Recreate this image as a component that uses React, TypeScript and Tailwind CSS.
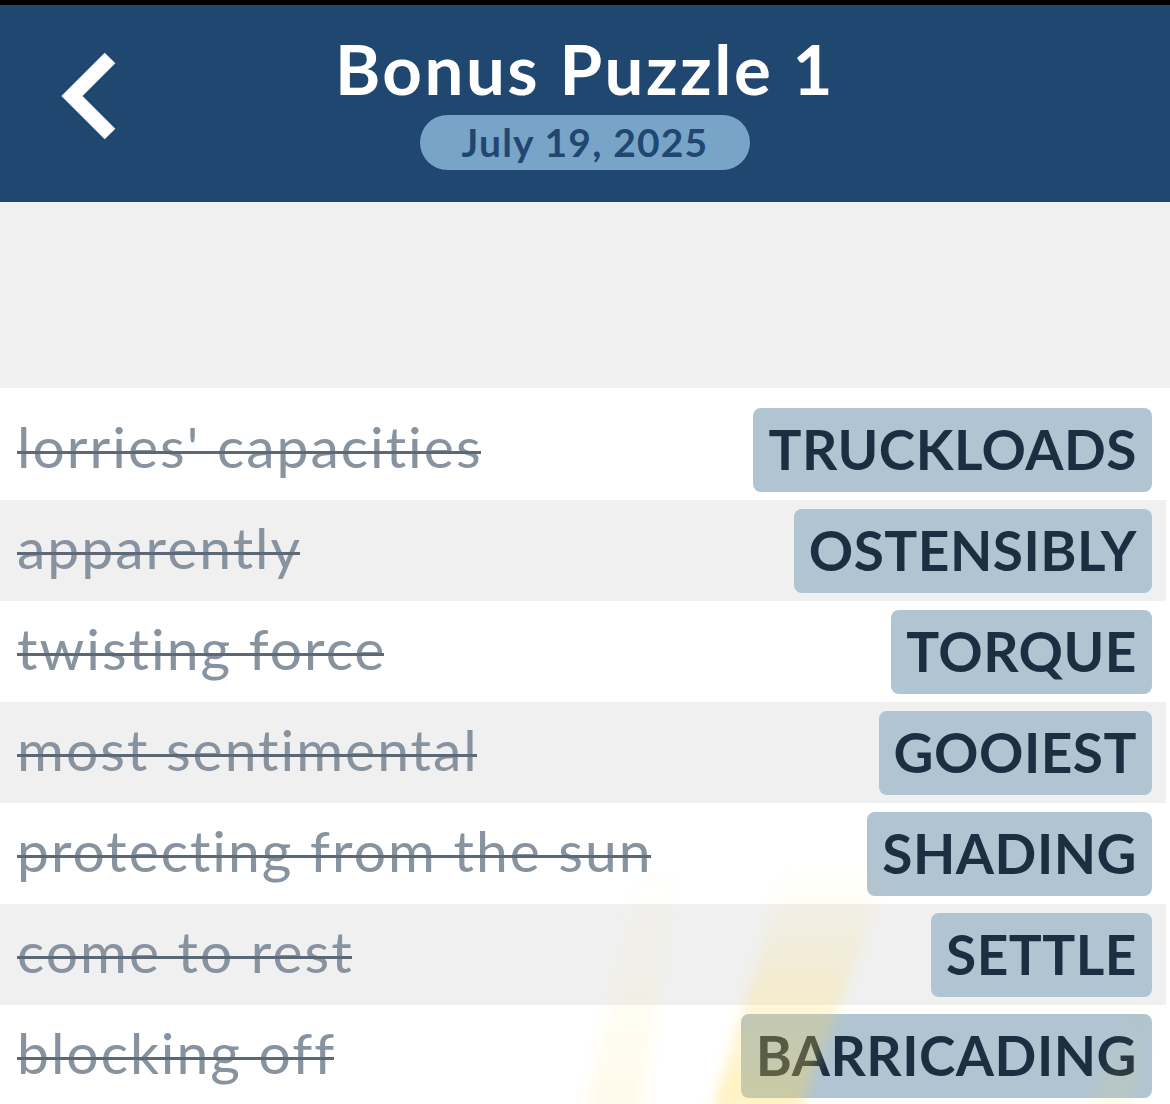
import React from "react";

const rows: { clue: string; answer: string }[] = [
  { clue: "lorries' capacities", answer: "TRUCKLOADS" },
  { clue: "apparently", answer: "OSTENSIBLY" },
  { clue: "twisting force", answer: "TORQUE" },
  { clue: "most sentimental", answer: "GOOIEST" },
  { clue: "protecting from the sun", answer: "SHADING" },
  { clue: "come to rest", answer: "SETTLE" },
  { clue: "blocking off", answer: "BARRICADING" },
];

function BackChevron() {
  return (
    <svg width="64" height="94" viewBox="0 0 64 94" fill="none">
      <path
        d="M53 9 L15 47 L53 85"
        stroke="#ffffff"
        strokeWidth="15"
        strokeLinecap="butt"
        strokeLinejoin="miter"
      />
    </svg>
  );
}

function Rays() {
  // faint yellow light streaks from the celebration effect
  return (
    <svg
      className="pointer-events-none absolute left-0 top-0"
      width="1170"
      height="1104"
      viewBox="0 0 1170 1104"
    >
      <defs>
        <linearGradient id="rayA" x1="0" y1="1" x2="0" y2="0">
          <stop offset="0" stopColor="#ffd84a" stopOpacity="0.34" />
          <stop offset="0.55" stopColor="#ffd84a" stopOpacity="0.18" />
          <stop offset="1" stopColor="#ffd84a" stopOpacity="0" />
        </linearGradient>
        <linearGradient id="rayB" x1="0" y1="1" x2="0" y2="0">
          <stop offset="0" stopColor="#ffd84a" stopOpacity="0.12" />
          <stop offset="1" stopColor="#ffd84a" stopOpacity="0" />
        </linearGradient>
        <filter id="soft" x="-20%" y="-20%" width="140%" height="140%">
          <feGaussianBlur stdDeviation="6" />
        </filter>
      </defs>
      <g filter="url(#soft)">
        <polygon points="712,1110 785,870 890,870 800,1110" fill="url(#rayA)" />
        <polygon points="585,1110 640,870 680,870 640,1110" fill="url(#rayB)" />
        <polygon points="1090,1110 1130,1000 1160,1000 1130,1110" fill="url(#rayB)" />
      </g>
    </svg>
  );
}

export default function App() {
  return (
    <div
      className="relative w-[1170px] h-[1104px] overflow-hidden bg-white"
      style={{ fontFamily: "Lato, 'Noto Sans', sans-serif" }}
    >
      <div className="h-[5px] bg-black" />
      <header className="relative h-[197px] bg-[#1f4770] flex flex-col items-center">
        <div className="absolute left-[57px] top-[44px]">
          <BackChevron />
        </div>
        <h1 className="mt-[26px] text-white font-bold text-[69px] leading-[76px] tracking-[2.5px]">
          Bonus Puzzle 1
        </h1>
        <div className="mt-[8px] w-[330px] h-[55px] rounded-full bg-[#78a4c8] flex items-center justify-center">
          <span className="text-[#1f4770] font-bold text-[39px] leading-none tracking-[1.2px]">
            July 19, 2025
          </span>
        </div>
      </header>
      <div className="h-[186px] bg-[#f0f0f0]" />
      <div className="pt-[11px]">
        {rows.map((r, i) => (
          <div
            key={r.answer}
            className={
              "h-[101px] w-[1166px] flex items-center justify-between pl-[17px] pr-[14px] " +
              (i % 2 === 1 ? "bg-[#f0f0f0]" : "bg-white")
            }
          >
            <span className="relative text-[#8893a0] text-[57px] leading-none tracking-[2px] pb-[6px]">
              {r.clue}
              <span className="absolute left-0 right-[2px] top-[33px] h-[3px] bg-[#5b6876]" />
            </span>
            <span className="h-[84px] rounded-[8px] bg-[#b0c4d2] px-[15px] flex items-center text-[#1b2e42] font-bold text-[55px] leading-none tracking-[0.5px]">
              {r.answer}
            </span>
          </div>
        ))}
      </div>
      <Rays />
    </div>
  );
}
